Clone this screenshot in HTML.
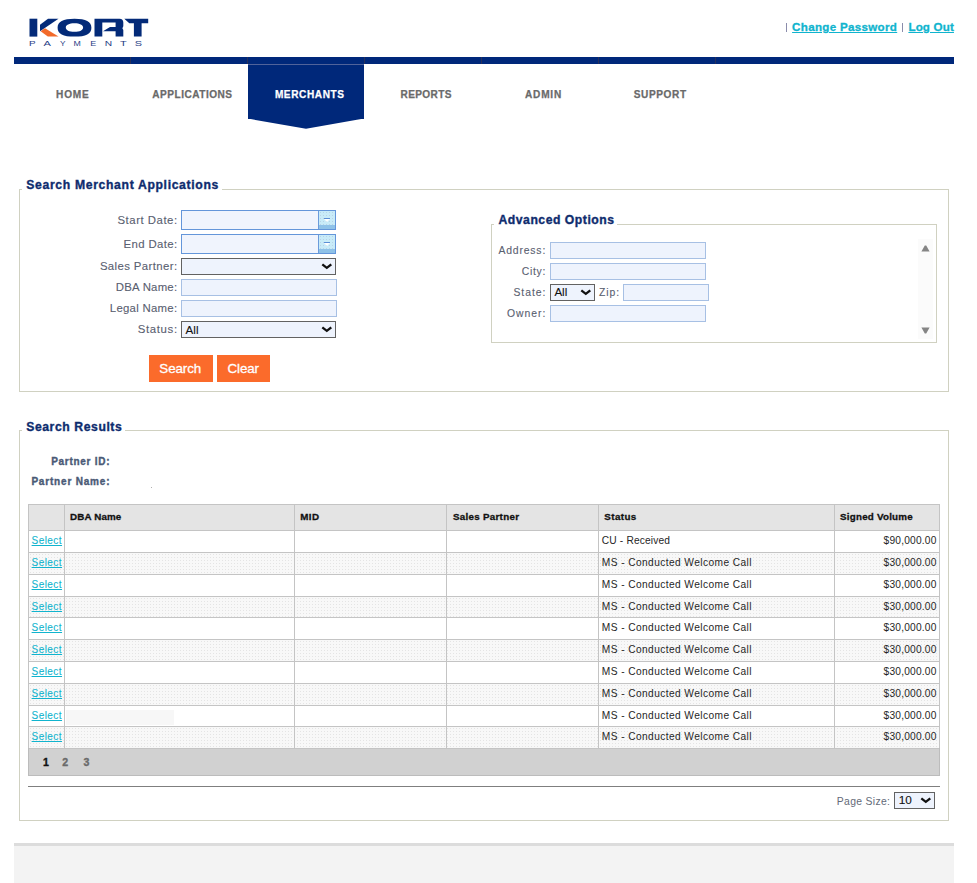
<!DOCTYPE html>
<html><head><meta charset="utf-8">
<style>
*{box-sizing:border-box;margin:0;padding:0}
html,body{width:977px;height:883px;overflow:hidden;background:#fff;font-family:"Liberation Sans",sans-serif}
.a{position:absolute}
.t{position:absolute;white-space:nowrap;line-height:1}
.date{position:absolute;background:#f0f4fd;border:1px solid #6496da;border-right-width:2px}
.date i{position:absolute;left:136px;top:0;width:17px;bottom:0;background:linear-gradient(transparent 0,transparent 14px,#8fc2e8 14px),radial-gradient(circle,#b9d3e6 0.6px,transparent 1px) 0 0/3px 3px,#c8ebf8;border-left:1px solid #6b9bdb}
.date i:before{content:"";position:absolute;left:5px;top:7px;width:6px;height:1px;background:#5b8fd6}
.date i b{position:absolute;left:4.5px;top:8px;width:0;height:0;border-left:3.5px solid transparent;border-right:3.5px solid transparent;border-top:3.5px solid #fff}
.sel{position:absolute;background:#eef3fd;border:1px solid #626262}
</style></head><body>
<svg class="a" style="left:0;top:0" width="160" height="50" viewBox="0 0 160 50">
 <g fill="#032a78">
  <rect x="29.5" y="18.7" width="7.8" height="17.9"/>
  <polygon points="40,24.8 48,18.7 58.5,18.7 40,31.2"/>
  <path fill-rule="evenodd" d="M57.60 27.65C57.60 21.56 63.01 18.70 74.50 18.70C85.99 18.70 91.40 21.56 91.40 27.65C91.40 33.74 85.99 36.60 74.50 36.60C63.01 36.60 57.60 33.74 57.60 27.65Z M65.80 27.55C65.80 24.88 69.09 23.25 74.45 23.25C79.81 23.25 83.10 24.88 83.10 27.55C83.10 30.22 79.81 31.85 74.45 31.85C69.09 31.85 65.80 30.22 65.80 27.55Z"/>
  <path d="M94.5 18.7H119.5Q123.3 18.7 123.3 22.5V26.3L122.4 28.2L123.3 30.1V36.6H115.6V31.3H103L110 27H115.6V22.6H102.3V36.6H94.5Z"/>
  <path d="M124.3 18.7H148.2V23.3H141.6V36.6H133.9V23.3H129.3Z"/>
 </g>
 <polygon points="40.6,31.2 45,28.2 58.5,36.6 47.8,36.6" fill="#f26a2a"/>
 <g fill="#1f3d85" font-size="6.3" font-family="Liberation Sans" font-weight="400">
  <text x="29" y="45.6" textLength="6.6" lengthAdjust="spacingAndGlyphs">P</text>
  <text x="43.6" y="45.6" textLength="7.4" lengthAdjust="spacingAndGlyphs">A</text>
  <text x="59.9" y="45.6" textLength="5.5" lengthAdjust="spacingAndGlyphs">Y</text>
  <text x="73.6" y="45.6" textLength="7.3" lengthAdjust="spacingAndGlyphs">M</text>
  <text x="90.2" y="45.6" textLength="6" lengthAdjust="spacingAndGlyphs">E</text>
  <text x="104.8" y="45.6" textLength="7.4" lengthAdjust="spacingAndGlyphs">N</text>
  <text x="120.1" y="45.6" textLength="6.7" lengthAdjust="spacingAndGlyphs">T</text>
  <text x="134.8" y="45.6" textLength="7.3" lengthAdjust="spacingAndGlyphs">S</text>
 </g>
</svg>

<div class="a" style="left:786px;top:22.5px;width:1px;height:9.5px;background:#8a8cab"></div>
<div class="a" style="left:902px;top:22.5px;width:1px;height:9.5px;background:#8a8cab"></div>
<div class="a" style="left:14px;top:57px;width:940px;height:7px;background:#00287a"></div>
<div class="a" style="left:130px;top:57px;width:1px;height:7px;background:#27305a"></div>
<div class="a" style="left:247px;top:57px;width:1px;height:7px;background:#27305a"></div>
<div class="a" style="left:364px;top:57px;width:1px;height:7px;background:#27305a"></div>
<div class="a" style="left:481px;top:57px;width:1px;height:7px;background:#27305a"></div>
<div class="a" style="left:598px;top:57px;width:1px;height:7px;background:#27305a"></div>
<div class="a" style="left:715px;top:57px;width:1px;height:7px;background:#27305a"></div>
<div class="a" style="left:248px;top:64px;width:116px;height:55px;background:#00287a"></div>
<svg class="a" style="left:248px;top:118px" width="116" height="12"><polygon points="0,0 116,0 116,0.6 58,10.8 0,0.6" fill="#00287a"/></svg>
<div class="a" style="left:248px;top:64px;width:116px;height:1px;background:#51639a"></div>
<div class="a" style="left:19px;top:189px;width:930px;height:203px;border:1px solid #d0d1c1"></div>
<div class="a" style="left:22px;top:180px;width:200px;height:12px;background:#fff"></div>
<div class="date" style="left:181px;top:210px;width:155px;height:20px"><i><b></b></i></div>
<div class="date" style="left:181px;top:234px;width:155px;height:20px"><i><b></b></i></div>
<div class="sel" style="left:181px;top:258px;width:155px;height:17px"><svg width="12" height="8" style="position:absolute;right:2px;top:4.3px"><path d="M1.3 1.3L5.8 4.9L10.3 1.3" stroke="#111" stroke-width="2.3" fill="none"/></svg></div>
<div class="a" style="left:181px;top:279px;width:156px;height:17px;background:#eef3fd;border:1px solid #a7c0e4"></div>
<div class="a" style="left:181px;top:300px;width:156px;height:17px;background:#eef3fd;border:1px solid #a7c0e4"></div>
<div class="sel" style="left:181px;top:321px;width:155px;height:17px"><svg width="12" height="8" style="position:absolute;right:2px;top:4.3px"><path d="M1.3 1.3L5.8 4.9L10.3 1.3" stroke="#111" stroke-width="2.3" fill="none"/></svg></div>
<div class="a" style="left:149px;top:355px;width:64px;height:27px;background:#fb6b2b"></div>
<div class="a" style="left:217px;top:355px;width:53px;height:27px;background:#fb6b2b"></div>
<div class="a" style="left:491px;top:224px;width:446px;height:119px;border:1px solid #d0d1c1"></div>
<div class="a" style="left:494px;top:215px;width:123px;height:12px;background:#fff"></div>
<div class="a" style="left:550px;top:242px;width:156px;height:17px;background:#eef3fd;border:1px solid #a7c0e4"></div>
<div class="a" style="left:550px;top:263px;width:156px;height:17px;background:#eef3fd;border:1px solid #a7c0e4"></div>
<div class="a" style="left:550px;top:305px;width:156px;height:17px;background:#eef3fd;border:1px solid #a7c0e4"></div>
<div class="sel" style="left:550px;top:284px;width:45px;height:17px"><svg width="12" height="8" style="position:absolute;right:2px;top:4.3px"><path d="M1.3 1.3L5.8 4.9L10.3 1.3" stroke="#111" stroke-width="2.3" fill="none"/></svg></div>
<div class="a" style="left:623px;top:284px;width:86px;height:17px;background:#eef3fd;border:1px solid #a7c0e4"></div>
<div class="a" style="left:918px;top:239px;width:15px;height:100px;background:#fbfbfb"></div>
<svg class="a" style="left:920px;top:244.5px" width="11" height="8"><polygon points="4.8,0.6 6.2,0.6 9.6,6.4 1.4,6.4" fill="#858585"/></svg>
<svg class="a" style="left:920px;top:326.5px" width="11" height="8"><polygon points="1.4,0.6 9.6,0.6 6.2,6.4 4.8,6.4" fill="#858585"/></svg>
<div class="a" style="left:19px;top:430px;width:930px;height:391px;border:1px solid #d0d1c1"></div>
<div class="a" style="left:22px;top:422px;width:103px;height:12px;background:#fff"></div>
<div class="a" style="left:28px;top:504px;width:911px;height:26px;background:#e4e4e4"></div>
<div class="a" style="left:28px;top:552.09px;width:911px;height:21.79px;background:radial-gradient(circle,#e4e4e4 0.55px,transparent 0.9px) 1px 1px/3px 3px,#f8f8f8"></div>
<div class="a" style="left:28px;top:595.67px;width:911px;height:21.79px;background:radial-gradient(circle,#e4e4e4 0.55px,transparent 0.9px) 1px 1px/3px 3px,#f8f8f8"></div>
<div class="a" style="left:28px;top:639.25px;width:911px;height:21.79px;background:radial-gradient(circle,#e4e4e4 0.55px,transparent 0.9px) 1px 1px/3px 3px,#f8f8f8"></div>
<div class="a" style="left:28px;top:682.83px;width:911px;height:21.79px;background:radial-gradient(circle,#e4e4e4 0.55px,transparent 0.9px) 1px 1px/3px 3px,#f8f8f8"></div>
<div class="a" style="left:28px;top:726.41px;width:911px;height:21.79px;background:radial-gradient(circle,#e4e4e4 0.55px,transparent 0.9px) 1px 1px/3px 3px,#f8f8f8"></div>
<div class="a" style="left:28px;top:748.2px;width:912px;height:27.2px;background:#d1d1d1"></div>
<div class="a" style="left:28px;top:504px;width:911px;height:1px;background:#c4c4c4"></div>
<div class="a" style="left:28px;top:530.3px;width:911px;height:1px;background:#c4c4c4"></div>
<div class="a" style="left:28px;top:552.09px;width:911px;height:1px;background:#c4c4c4"></div>
<div class="a" style="left:28px;top:573.88px;width:911px;height:1px;background:#c4c4c4"></div>
<div class="a" style="left:28px;top:595.67px;width:911px;height:1px;background:#c4c4c4"></div>
<div class="a" style="left:28px;top:617.46px;width:911px;height:1px;background:#c4c4c4"></div>
<div class="a" style="left:28px;top:639.25px;width:911px;height:1px;background:#c4c4c4"></div>
<div class="a" style="left:28px;top:661.04px;width:911px;height:1px;background:#c4c4c4"></div>
<div class="a" style="left:28px;top:682.83px;width:911px;height:1px;background:#c4c4c4"></div>
<div class="a" style="left:28px;top:704.62px;width:911px;height:1px;background:#c4c4c4"></div>
<div class="a" style="left:28px;top:726.41px;width:911px;height:1px;background:#c4c4c4"></div>
<div class="a" style="left:28px;top:748.2px;width:911px;height:1px;background:#c4c4c4"></div>
<div class="a" style="left:28px;top:504px;width:1px;height:245.2px;background:#c4c4c4"></div>
<div class="a" style="left:64px;top:504px;width:1px;height:245.2px;background:#c4c4c4"></div>
<div class="a" style="left:294px;top:504px;width:1px;height:245.2px;background:#c4c4c4"></div>
<div class="a" style="left:446px;top:504px;width:1px;height:245.2px;background:#c4c4c4"></div>
<div class="a" style="left:598px;top:504px;width:1px;height:245.2px;background:#c4c4c4"></div>
<div class="a" style="left:834px;top:504px;width:1px;height:245.2px;background:#c4c4c4"></div>
<div class="a" style="left:939px;top:504px;width:1px;height:245.2px;background:#c4c4c4"></div>
<div class="a" style="left:28px;top:748.2px;width:1px;height:27.2px;background:#bcbcbc"></div>
<div class="a" style="left:939px;top:748.2px;width:1px;height:27.2px;background:#bcbcbc"></div>
<div class="a" style="left:28px;top:774.5px;width:912px;height:1px;background:#bcbcbc"></div>
<div class="a" style="left:66px;top:709.5px;width:108px;height:15px;background:#f7f7f7"></div>
<div class="a" style="left:151px;top:487px;width:1px;height:1px;background:#b0b0b0"></div>
<div class="a" style="left:28px;top:786px;width:912px;height:1px;background:#7f7f7f"></div>
<div class="sel" style="left:894px;top:792px;width:41px;height:17px"><svg width="12" height="8" style="position:absolute;right:2px;top:4.3px"><path d="M1.3 1.3L5.8 4.9L10.3 1.3" stroke="#111" stroke-width="2.3" fill="none"/></svg></div>
<div class="a" style="left:14px;top:843px;width:940px;height:40px;background:#f3f3f3;border-top:3px solid #dcdcdc"></div>
<div class="t" style="left:792.10px;top:21.00px;font-size:11.6px;font-weight:700;color:#10b4ce;letter-spacing:0.306px;-webkit-text-stroke:0.3px #10b4ce;text-decoration:underline">Change Password</div>
<div class="t" style="left:908.40px;top:21.00px;font-size:11.6px;font-weight:700;color:#10b4ce;letter-spacing:0.160px;-webkit-text-stroke:0.3px #10b4ce;text-decoration:underline">Log Out</div>
<div class="t" style="left:56.00px;top:90.00px;font-size:10.1px;font-weight:700;color:#6a6a6a;letter-spacing:0.840px;-webkit-text-stroke:0.25px #6a6a6a;">HOME</div>
<div class="t" style="left:152.30px;top:90.00px;font-size:10.1px;font-weight:700;color:#6a6a6a;letter-spacing:0.490px;-webkit-text-stroke:0.25px #6a6a6a;">APPLICATIONS</div>
<div class="t" style="left:400.50px;top:90.00px;font-size:10.1px;font-weight:700;color:#6a6a6a;letter-spacing:0.351px;-webkit-text-stroke:0.25px #6a6a6a;">REPORTS</div>
<div class="t" style="left:525.00px;top:90.00px;font-size:10.1px;font-weight:700;color:#6a6a6a;letter-spacing:0.777px;-webkit-text-stroke:0.25px #6a6a6a;">ADMIN</div>
<div class="t" style="left:633.80px;top:90.00px;font-size:10.1px;font-weight:700;color:#6a6a6a;letter-spacing:0.584px;-webkit-text-stroke:0.25px #6a6a6a;">SUPPORT</div>
<div class="t" style="left:274.90px;top:90.00px;font-size:10.1px;font-weight:700;color:#ffffff;letter-spacing:0.575px;-webkit-text-stroke:0.25px #ffffff;">MERCHANTS</div>
<div class="t" style="left:26.30px;top:179.00px;font-size:12.2px;font-weight:700;color:#0e2c6e;letter-spacing:0.656px;-webkit-text-stroke:0.35px #0e2c6e;">Search Merchant Applications</div>
<div class="t" style="left:498.50px;top:214.00px;font-size:12.2px;font-weight:700;color:#0e2c6e;letter-spacing:0.522px;-webkit-text-stroke:0.35px #0e2c6e;">Advanced Options</div>
<div class="t" style="left:26.20px;top:421.00px;font-size:12.2px;font-weight:700;color:#0e2c6e;letter-spacing:0.580px;-webkit-text-stroke:0.35px #0e2c6e;">Search Results</div>
<div class="t" style="left:117.50px;top:215.00px;font-size:11.4px;font-weight:400;color:#596070;letter-spacing:0.515px;-webkit-text-stroke:0.1px #596070;">Start Date:</div>
<div class="t" style="left:123.60px;top:239.00px;font-size:11.4px;font-weight:400;color:#596070;letter-spacing:0.354px;-webkit-text-stroke:0.1px #596070;">End Date:</div>
<div class="t" style="left:99.90px;top:261.00px;font-size:11.4px;font-weight:400;color:#596070;letter-spacing:0.386px;-webkit-text-stroke:0.1px #596070;">Sales Partner:</div>
<div class="t" style="left:115.80px;top:282.00px;font-size:11.4px;font-weight:400;color:#596070;letter-spacing:0.223px;-webkit-text-stroke:0.1px #596070;">DBA Name:</div>
<div class="t" style="left:109.80px;top:303.00px;font-size:11.4px;font-weight:400;color:#596070;letter-spacing:0.271px;-webkit-text-stroke:0.1px #596070;">Legal Name:</div>
<div class="t" style="left:137.70px;top:324.00px;font-size:11.4px;font-weight:400;color:#596070;letter-spacing:0.655px;-webkit-text-stroke:0.1px #596070;">Status:</div>
<div class="t" style="left:498.40px;top:246.00px;font-size:10.4px;font-weight:400;color:#596070;letter-spacing:0.841px;-webkit-text-stroke:0.1px #596070;">Address:</div>
<div class="t" style="left:521.70px;top:267.00px;font-size:10.4px;font-weight:400;color:#596070;letter-spacing:0.701px;-webkit-text-stroke:0.1px #596070;">City:</div>
<div class="t" style="left:513.50px;top:288.00px;font-size:10.4px;font-weight:400;color:#596070;letter-spacing:0.929px;-webkit-text-stroke:0.1px #596070;">State:</div>
<div class="t" style="left:599.00px;top:288.00px;font-size:10.4px;font-weight:400;color:#596070;letter-spacing:0.924px;-webkit-text-stroke:0.1px #596070;">Zip:</div>
<div class="t" style="left:506.90px;top:309.00px;font-size:10.4px;font-weight:400;color:#596070;letter-spacing:0.980px;-webkit-text-stroke:0.1px #596070;">Owner:</div>
<div class="t" style="left:185.60px;top:324.00px;font-size:11.6px;font-weight:400;color:#111;-webkit-text-stroke:0.1px #111;">All</div>
<div class="t" style="left:554.40px;top:286.00px;font-size:11.6px;font-weight:400;color:#111;-webkit-text-stroke:0.1px #111;">All</div>
<div class="t" style="left:898.80px;top:795.00px;font-size:11.8px;font-weight:400;color:#111;-webkit-text-stroke:0.1px #111;">10</div>
<div class="t" style="left:159.30px;top:362.00px;font-size:13.4px;font-weight:400;color:#fff;letter-spacing:-0.087px;-webkit-text-stroke:0.3px #fff;">Search</div>
<div class="t" style="left:227.50px;top:362.00px;font-size:13.4px;font-weight:400;color:#fff;letter-spacing:-0.125px;-webkit-text-stroke:0.3px #fff;">Clear</div>
<div class="t" style="left:51.20px;top:457.00px;font-size:10.0px;font-weight:700;color:#4a5a76;letter-spacing:0.717px;-webkit-text-stroke:0.35px #4a5a76;">Partner ID:</div>
<div class="t" style="left:31.40px;top:477.00px;font-size:10.0px;font-weight:700;color:#4a5a76;letter-spacing:0.812px;-webkit-text-stroke:0.35px #4a5a76;">Partner Name:</div>
<div class="t" style="left:70.10px;top:512.00px;font-size:9.8px;font-weight:700;color:#111;letter-spacing:0.131px;-webkit-text-stroke:0.3px #111;">DBA Name</div>
<div class="t" style="left:300.20px;top:512.00px;font-size:9.8px;font-weight:700;color:#111;letter-spacing:0.416px;-webkit-text-stroke:0.3px #111;">MID</div>
<div class="t" style="left:452.90px;top:512.00px;font-size:9.8px;font-weight:700;color:#111;letter-spacing:0.288px;-webkit-text-stroke:0.3px #111;">Sales Partner</div>
<div class="t" style="left:604.30px;top:512.00px;font-size:9.8px;font-weight:700;color:#111;letter-spacing:0.409px;-webkit-text-stroke:0.3px #111;">Status</div>
<div class="t" style="left:840.10px;top:512.00px;font-size:9.8px;font-weight:700;color:#111;letter-spacing:0.213px;-webkit-text-stroke:0.3px #111;">Signed Volume</div>
<div class="t" style="left:31.60px;top:536.00px;font-size:10px;font-weight:400;color:#10b4ce;letter-spacing:0.441px;-webkit-text-stroke:0.08px #10b4ce;text-decoration:underline">Select</div>
<div class="t" style="left:601.80px;top:536.00px;font-size:10.2px;font-weight:400;color:#262626;letter-spacing:0.163px;">CU - Received</div>
<div class="t" style="left:883.50px;top:536.00px;font-size:10.2px;font-weight:400;color:#262626;letter-spacing:0.211px;">$90,000.00</div>
<div class="t" style="left:31.60px;top:558.00px;font-size:10px;font-weight:400;color:#10b4ce;letter-spacing:0.441px;-webkit-text-stroke:0.08px #10b4ce;text-decoration:underline">Select</div>
<div class="t" style="left:601.80px;top:558.00px;font-size:10.2px;font-weight:400;color:#262626;letter-spacing:0.408px;">MS - Conducted Welcome Call</div>
<div class="t" style="left:883.50px;top:558.00px;font-size:10.2px;font-weight:400;color:#262626;letter-spacing:0.211px;">$30,000.00</div>
<div class="t" style="left:31.60px;top:580.00px;font-size:10px;font-weight:400;color:#10b4ce;letter-spacing:0.441px;-webkit-text-stroke:0.08px #10b4ce;text-decoration:underline">Select</div>
<div class="t" style="left:601.80px;top:580.00px;font-size:10.2px;font-weight:400;color:#262626;letter-spacing:0.408px;">MS - Conducted Welcome Call</div>
<div class="t" style="left:883.50px;top:580.00px;font-size:10.2px;font-weight:400;color:#262626;letter-spacing:0.211px;">$30,000.00</div>
<div class="t" style="left:31.60px;top:602.00px;font-size:10px;font-weight:400;color:#10b4ce;letter-spacing:0.441px;-webkit-text-stroke:0.08px #10b4ce;text-decoration:underline">Select</div>
<div class="t" style="left:601.80px;top:602.00px;font-size:10.2px;font-weight:400;color:#262626;letter-spacing:0.408px;">MS - Conducted Welcome Call</div>
<div class="t" style="left:883.50px;top:602.00px;font-size:10.2px;font-weight:400;color:#262626;letter-spacing:0.211px;">$30,000.00</div>
<div class="t" style="left:31.60px;top:623.00px;font-size:10px;font-weight:400;color:#10b4ce;letter-spacing:0.441px;-webkit-text-stroke:0.08px #10b4ce;text-decoration:underline">Select</div>
<div class="t" style="left:601.80px;top:623.00px;font-size:10.2px;font-weight:400;color:#262626;letter-spacing:0.408px;">MS - Conducted Welcome Call</div>
<div class="t" style="left:883.50px;top:623.00px;font-size:10.2px;font-weight:400;color:#262626;letter-spacing:0.211px;">$30,000.00</div>
<div class="t" style="left:31.60px;top:645.00px;font-size:10px;font-weight:400;color:#10b4ce;letter-spacing:0.441px;-webkit-text-stroke:0.08px #10b4ce;text-decoration:underline">Select</div>
<div class="t" style="left:601.80px;top:645.00px;font-size:10.2px;font-weight:400;color:#262626;letter-spacing:0.408px;">MS - Conducted Welcome Call</div>
<div class="t" style="left:883.50px;top:645.00px;font-size:10.2px;font-weight:400;color:#262626;letter-spacing:0.211px;">$30,000.00</div>
<div class="t" style="left:31.60px;top:667.00px;font-size:10px;font-weight:400;color:#10b4ce;letter-spacing:0.441px;-webkit-text-stroke:0.08px #10b4ce;text-decoration:underline">Select</div>
<div class="t" style="left:601.80px;top:667.00px;font-size:10.2px;font-weight:400;color:#262626;letter-spacing:0.408px;">MS - Conducted Welcome Call</div>
<div class="t" style="left:883.50px;top:667.00px;font-size:10.2px;font-weight:400;color:#262626;letter-spacing:0.211px;">$30,000.00</div>
<div class="t" style="left:31.60px;top:689.00px;font-size:10px;font-weight:400;color:#10b4ce;letter-spacing:0.441px;-webkit-text-stroke:0.08px #10b4ce;text-decoration:underline">Select</div>
<div class="t" style="left:601.80px;top:689.00px;font-size:10.2px;font-weight:400;color:#262626;letter-spacing:0.408px;">MS - Conducted Welcome Call</div>
<div class="t" style="left:883.50px;top:689.00px;font-size:10.2px;font-weight:400;color:#262626;letter-spacing:0.211px;">$30,000.00</div>
<div class="t" style="left:31.60px;top:711.00px;font-size:10px;font-weight:400;color:#10b4ce;letter-spacing:0.441px;-webkit-text-stroke:0.08px #10b4ce;text-decoration:underline">Select</div>
<div class="t" style="left:601.80px;top:711.00px;font-size:10.2px;font-weight:400;color:#262626;letter-spacing:0.408px;">MS - Conducted Welcome Call</div>
<div class="t" style="left:883.50px;top:711.00px;font-size:10.2px;font-weight:400;color:#262626;letter-spacing:0.211px;">$30,000.00</div>
<div class="t" style="left:31.60px;top:732.00px;font-size:10px;font-weight:400;color:#10b4ce;letter-spacing:0.441px;-webkit-text-stroke:0.08px #10b4ce;text-decoration:underline">Select</div>
<div class="t" style="left:601.80px;top:732.00px;font-size:10.2px;font-weight:400;color:#262626;letter-spacing:0.408px;">MS - Conducted Welcome Call</div>
<div class="t" style="left:883.50px;top:732.00px;font-size:10.2px;font-weight:400;color:#262626;letter-spacing:0.211px;">$30,000.00</div>
<div class="t" style="left:43.00px;top:757.00px;font-size:10.6px;font-weight:700;color:#111;-webkit-text-stroke:0.35px #111;">1</div>
<div class="t" style="left:62.30px;top:757.00px;font-size:10.6px;font-weight:700;color:#6a6a6a;-webkit-text-stroke:0.35px #6a6a6a;">2</div>
<div class="t" style="left:83.50px;top:757.00px;font-size:10.6px;font-weight:700;color:#6a6a6a;-webkit-text-stroke:0.35px #6a6a6a;">3</div>
<div class="t" style="left:836.80px;top:797.00px;font-size:10.4px;font-weight:400;color:#646a78;letter-spacing:0.326px;">Page Size:</div>
</body></html>
